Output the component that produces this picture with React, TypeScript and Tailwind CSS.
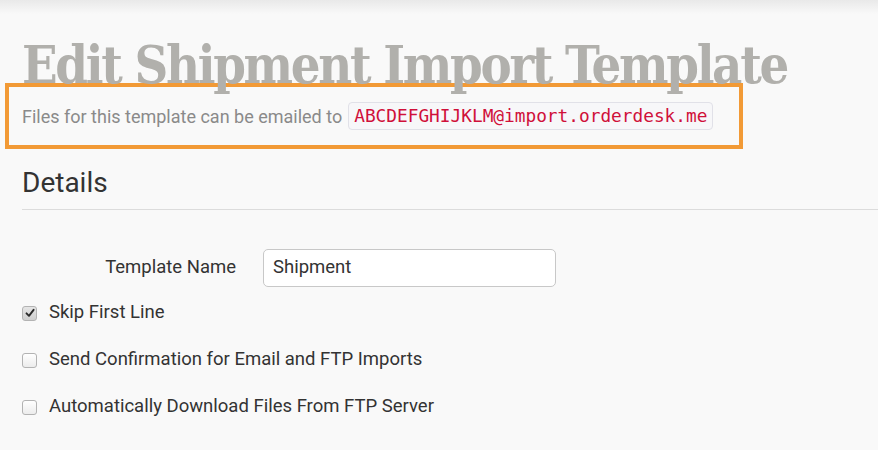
const labelFont = { fontFamily: "Roboto, 'Liberation Sans', sans-serif" };

function Checkbox({ checked }: { checked?: boolean }) {
  return (
    <span
      className={`flex h-[15px] w-[15px] shrink-0 items-center justify-center rounded-[3px] border border-[#b3b3b3] ${
        checked ? "bg-gradient-to-b from-[#e6e6e6] to-[#cfcfcf]" : "bg-gradient-to-b from-white to-[#ececec]"
      }`}
    >
      {checked && (
        <svg width="10" height="10" viewBox="0 0 10 10">
          <path d="M1.5 5.3 L4 7.8 L8.6 1.8" fill="none" stroke="#2b2b2b" strokeWidth="1.9" strokeLinecap="round" strokeLinejoin="round" />
        </svg>
      )}
    </span>
  );
}

const options = [
  { label: "Skip First Line", checked: true },
  { label: "Send Confirmation for Email and FTP Imports", checked: false },
  { label: "Automatically Download Files From FTP Server", checked: false },
];

export default function App() {
  return (
    <div className="min-h-[450px] w-[878px] overflow-hidden bg-[#f9f9f9]" style={labelFont}>
      {/* top shadow */}
      <div className="h-[14px] bg-gradient-to-b from-[#e9e9e9] to-[#f9f9f9]" />

      <h1
        className="relative z-10 mt-[25px] pl-[22px] text-[52px] font-bold leading-[52px] tracking-[-2.3px] whitespace-nowrap text-[#b1b0ac]"
        style={{ fontFamily: "'DejaVu Serif', 'Liberation Serif', serif", fontStretch: "condensed" }}
      >
        Edit Shipment Import Template
      </h1>

      {/* highlighted email box */}
      <div className="ml-[5px] mt-[-8px] flex h-[66px] w-[738px] items-center border-4 border-[#f29a36] pl-[13px]">
        <span className="text-[18px] text-[#8a8a8a]">Files for this template can be emailed to</span>
        <code
          className="ml-[6px] rounded-[4px] border border-[#e1e1e8] bg-[#f7f7f9] px-[5px] py-[1px] text-[17.8px] leading-[24px] text-[#d0103a]"
          style={{ fontFamily: "'DejaVu Sans Mono', 'Liberation Mono', monospace" }}
        >
          ABCDEFGHIJKLM@import.orderdesk.me
        </code>
      </div>

      <h2 className="mt-[18px] pl-[22px] text-[28px] leading-[32px] text-[#333]">Details</h2>
      <div className="ml-[22px] mt-[10px] border-t border-[#dcdcdc]" />

      <div className="mt-[39px] flex items-center">
        <label className="w-[236px] text-right text-[18.5px] text-[#333]">Template Name</label>
        <div className="ml-[27px] flex h-[38px] w-[293px] items-center rounded-[5px] border border-[#c8c8c8] bg-white pl-[9px] text-[18.5px] text-[#333]">
          Shipment
        </div>
      </div>

      <div className="mt-[14px] flex flex-col gap-[23px] pl-[22px]">
        {options.map((o) => (
          <div key={o.label} className="flex h-[24px] items-center gap-[12px] text-[18.5px] text-[#333]">
            <Checkbox checked={o.checked} />
            <span>{o.label}</span>
          </div>
        ))}
      </div>
    </div>
  );
}
